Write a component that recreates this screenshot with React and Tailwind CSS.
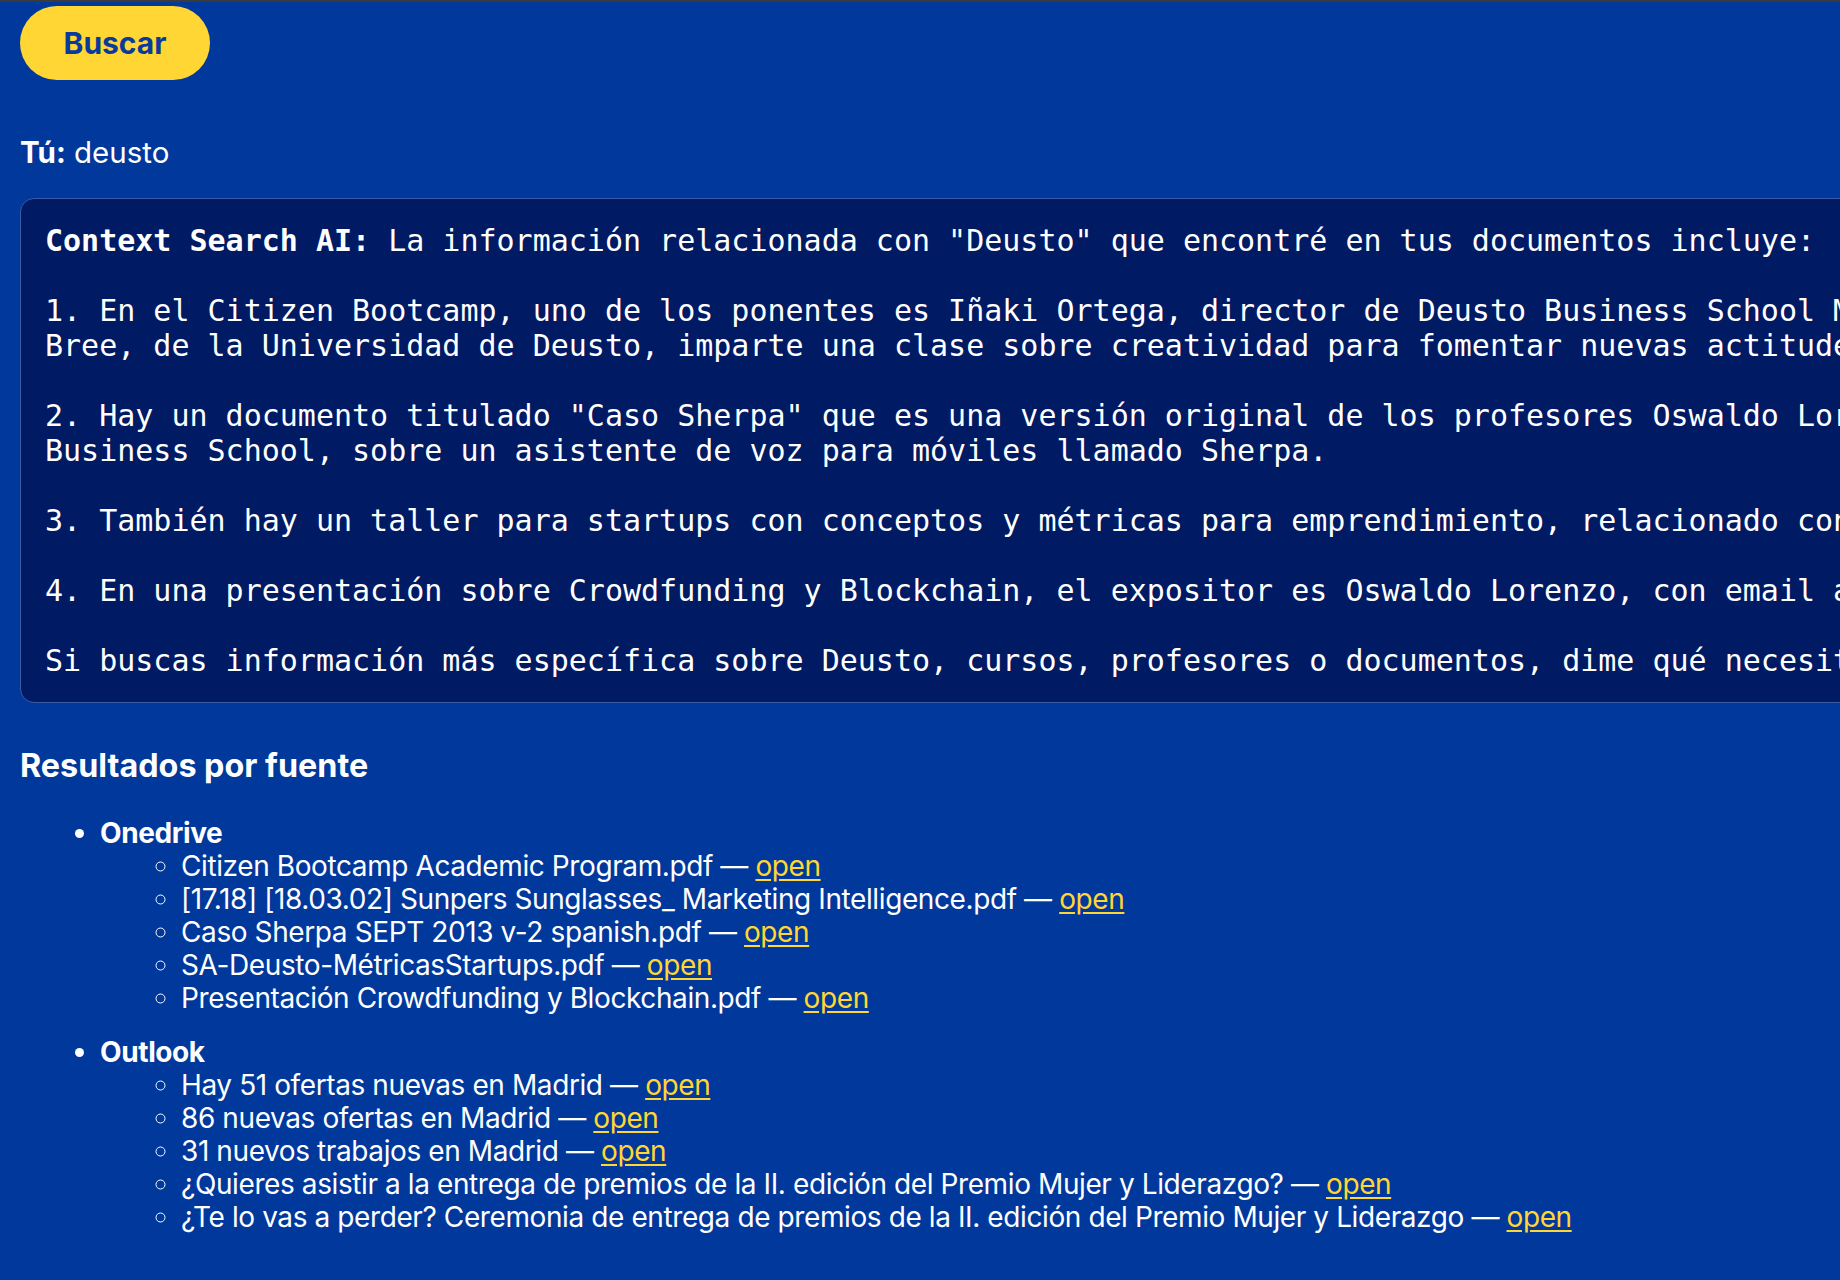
import React from "react";

const sans = { fontFamily: "Inter, 'Noto Sans', sans-serif" };

const onedrive = [
  "Citizen Bootcamp Academic Program.pdf",
  "[17.18] [18.03.02] Sunpers Sunglasses_ Marketing Intelligence.pdf",
  "Caso Sherpa SEPT 2013 v-2 spanish.pdf",
  "SA-Deusto-MétricasStartups.pdf",
  "Presentación Crowdfunding y Blockchain.pdf",
];

const outlook = [
  "Hay 51 ofertas nuevas en Madrid",
  "86 nuevas ofertas en Madrid",
  "31 nuevos trabajos en Madrid",
  "¿Quieres asistir a la entrega de premios de la II. edición del Premio Mujer y Liderazgo?",
  "¿Te lo vas a perder? Ceremonia de entrega de premios de la II. edición del Premio Mujer y Liderazgo",
];

const answer = ` La información relacionada con "Deusto" que encontré en tus documentos incluye:

1. En el Citizen Bootcamp, uno de los ponentes es Iñaki Ortega, director de Deusto Business School Madrid. También Jon
Bree, de la Universidad de Deusto, imparte una clase sobre creatividad para fomentar nuevas actitudes emprendedoras.

2. Hay un documento titulado "Caso Sherpa" que es una versión original de los profesores Oswaldo Lorenzo, de Deusto
Business School, sobre un asistente de voz para móviles llamado Sherpa.

3. También hay un taller para startups con conceptos y métricas para emprendimiento, relacionado con Deusto.

4. En una presentación sobre Crowdfunding y Blockchain, el expositor es Oswaldo Lorenzo, con email asociado a Deusto.

Si buscas información más específica sobre Deusto, cursos, profesores o documentos, dime qué necesitas.`;

function Item({ text }) {
  return (
    <li className="list-[circle]">
      {text} —{" "}
      <a href="#" className="text-[#ffd633] underline underline-offset-[3px]">
        open
      </a>
    </li>
  );
}

export default function App() {
  return (
    <div className="w-full min-h-screen overflow-hidden bg-[#00389c] text-white border-t-2 border-[#3b3b3b]" style={sans}>
      <div className="pl-5 pb-10">
        <button className="mt-1 h-[74px] w-[190px] rounded-full bg-[#ffd633] text-[#0a3a9e] text-[30px] font-bold">
          Buscar
        </button>

        <div className="mt-[56px] text-[29.5px] leading-[33px]">
          <span className="font-bold">Tú:</span> deusto
        </div>

        <div className="mt-[29px] w-max min-w-full rounded-[14px] border border-[#3a5aa6] bg-[#001a64] px-6 py-6">
          <pre
            className="whitespace-pre text-[30px] leading-[35px] text-white"
            style={{ fontFamily: "'DejaVu Sans Mono', monospace" }}
          >
            <span className="font-bold">Context Search AI:</span>
            {answer}
          </pre>
        </div>

        <h3 className="mt-[44px] text-[32.3px] leading-[38px] font-bold">Resultados por fuente</h3>

        <ul className="mt-[32px] list-disc pl-[80px] text-[28px] leading-[33px] tracking-[-0.4px]">
          <li className="font-bold">
            Onedrive
            <ul className="pl-[81px] font-normal">
              {onedrive.map((t) => (
                <Item key={t} text={t} />
              ))}
            </ul>
          </li>
          <li className="mt-[21px] font-bold">
            Outlook
            <ul className="pl-[81px] font-normal">
              {outlook.map((t) => (
                <Item key={t} text={t} />
              ))}
            </ul>
          </li>
        </ul>
      </div>
    </div>
  );
}
